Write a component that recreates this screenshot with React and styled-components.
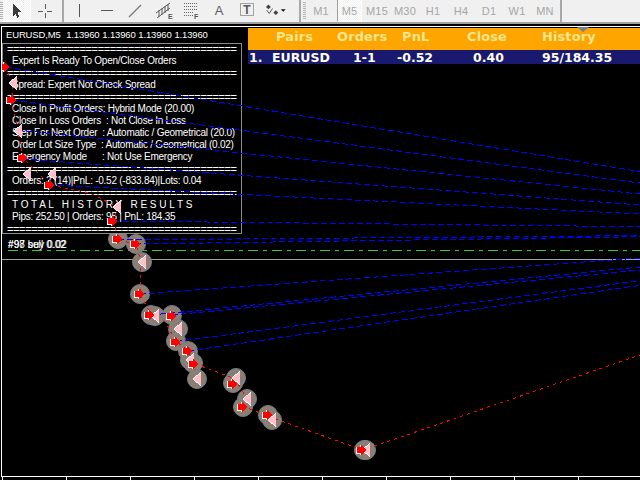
import React from "react";
import styled, { createGlobalStyle } from "styled-components";

const Global = createGlobalStyle`
  html, body { margin: 0; padding: 0; background: #000; }
  #root { width: 640px; height: 480px; overflow: hidden; }
`;

const Page = styled.div`
  width: 640px; height: 480px; background: #000; display: flex; flex-direction: column; overflow: hidden;
  font-family: "Liberation Sans", sans-serif;
`;
const Toolbar = styled.div`
  height: 22px; flex: none; display: flex; align-items: stretch; background: #f0f0f0;
  border-bottom: 2px solid #a0a0a0;
`;
const Grip = styled.div`
  width: 3px; margin: 2px ${p => p.$after || 0}px 2px ${p => p.$before || 0}px; flex: none;
  background: repeating-linear-gradient(#b4b4b4 0 1px, #f0f0f0 1px 2px);
`;
const Sep = styled.div`
  width: 2px; flex: none; background: #a8a8a8; margin: 0 ${p => p.$after || 0}px 0 ${p => p.$before || 0}px;
`;
const Tool = styled.div`
  width: 28px; flex: none; box-sizing: border-box; height: 22px; display: flex;
  ${p => p.$active && `
    background: repeating-conic-gradient(#ffffff 0 25%, #f0f0f0 0 50%) 0 0 / 2px 2px;
    border-right: 1px solid #fff; border-bottom: 1px solid #fff;
  `}
`;
const Tf = styled.div`
  width: 28px; flex: none; box-sizing: border-box; height: 22px; display: flex; align-items: center; justify-content: center;
  font-size: 11px; color: #a6a6a6; letter-spacing: .2px;
  ${p => p.$active && `
    width: 25px; margin: 0 1px 0 2px;
    background: repeating-conic-gradient(#ffffff 0 25%, #f0f0f0 0 50%) 0 0 / 2px 2px;
    border-left: 1px solid #a0a0a0; border-right: 1px solid #fff; border-bottom: 1px solid #fff;
  `}
`;
const ChartFrame = styled.div`
  position: relative; flex: none; box-sizing: border-box; height: 451px; margin: 2px 0 0 1px;
  border-left: 1px solid #fff; border-top: 1px solid #fff; border-bottom: 1px solid #fff;
`;
const TimeAxis = styled.div`
  flex: none; height: 3px; display: flex; margin-left: 2px;
`;
const Tick = styled.div`
  width: 64px; flex: none; box-sizing: border-box; border-left: 1px solid #fff;
`;
const Layer = styled.svg`
  position: absolute; left: 0; top: 0; width: 638px; height: 449px; z-index: ${p => p.$z};
`;
const Symbol = styled.div`
  position: absolute; left: 4px; top: 1px; height: 14px; line-height: 14px; z-index: 3; color: #fff;
  font-size: 9.5px; white-space: pre; letter-spacing: -.15px; word-spacing: .3px;
`;
const Panel = styled.div`
  position: absolute; left: 0; top: 16px; width: 240px; height: 191px; box-sizing: border-box; z-index: 2;
  background: #000; border: 1px solid #8c8c8c; display: flex; flex-direction: column;
  & > :first-child { margin-top: -1px; }
`;
const PanelLine = styled.div`
  height: 12px; line-height: 12px; flex: none; padding-left: 9px; color: #fff;
  font-size: 10px; white-space: pre; letter-spacing: ${p => p.$spacing ?? -0.25}px;
`;
const Rule = styled(PanelLine)`
  padding-left: 4px; font-size: 11px; letter-spacing: -.38px; overflow: hidden;
`;
const TradeLabel = styled.div`
  position: absolute; left: 6px; top: 211px; height: 14px; line-height: 14px; color: #fff; z-index: 2;
  font-size: 10px; white-space: pre; letter-spacing: .1px;
`;
const Table = styled.div`
  position: absolute; left: 246px; right: 0; top: 1px; z-index: 2; font-family: "DejaVu Sans", sans-serif;
  font-weight: 700; font-size: 12.5px; white-space: pre;
`;
const HeadRow = styled.div`
  height: 22px; box-sizing: border-box; padding-bottom: 6px; background: #ffa500; color: #f0e68c; display: grid; align-items: center;
  grid-template-columns: 28px 61px 65px 65px 75px 1fr; font-size: 13px; letter-spacing: .1px;
`;
const BodyRow = styled.div`
  height: 14px; box-sizing: border-box; padding-bottom: 1px; background: #191970; color: #fffff0; display: grid; align-items: center;
  grid-template-columns: 1px 23px 81px 44px 76px 69px 1fr;
`;
const ShiftMark = styled.div`
  position: absolute; left: 575px; top: 0; width: 0; height: 0; z-index: 4;
  border-left: 6px solid transparent; border-right: 6px solid transparent; border-top: 5px solid #708090;
`;

const Ico = ({ children }) => (
  <svg width="28" height="22" viewBox="0 0 28 22" fill="none" shapeRendering="crispEdges">{children}</svg>
);

const headers = ["", "Pairs", "Orders", "PnL", "Close", "History"];
const cells = ["", "1.", "EURUSD", "1-1", "-0.52", "0.40", "95/184.35"];
const rule = "=".repeat(38);
const ticks = Array.from({ length: 10 }, (_, i) => i);
const frames = ["M1", "M5", "M15", "M30", "H1", "H4", "D1", "W1", "MN"];

const rows = [
  ["r"],
  ["t", "Expert Is Ready To Open/Close Orders"],
  ["r"],
  ["t", "Spread: Expert Not Check Spread"],
  ["r"],
  ["t", "Close In Profit Orders: Hybrid Mode (20.00)"],
  ["t", "Close In Loss Orders  : Not Close In Loss"],
  ["t", "Step For Next Order  : Automatic / Geometrical (20.0)"],
  ["t", "Order Lot Size Type  : Automatic / Geometrical (0.02)"],
  ["t", "Emergency Mode      : Not Use Emergency"],
  ["r"],
  ["t", "Orders: 2 (14)|PnL: -0.52 (-833.84)|Lots: 0.04"],
  ["r"],
  ["t", "T O T A L   H I S T O R Y   R E S U L T S", 0],
  ["t", "Pips: 252.50 | Orders: 95 | PnL: 184.35"],
  ["r"],
];

const blue = [
  [6, 67, 640, 171.7], [12, 100, 640, 183], [17, 130, 640, 194], [23, 159, 640, 205],
  [49, 185, 640, 214], [114, 221, 640, 226.7], [118, 240, 640, 235.6], [135, 244, 640, 236.7],
  [140, 294, 640, 258], [151, 315, 640, 267], [172, 315, 640, 270], [176, 341.5, 640, 280.7], [188, 351, 640, 285.3],
];
const redPath = "5,67 13,83 12,100 18,131 23,158 50,185 90,193 117,207 114,221 118,240 136,244 141,262 140,294 151,315 165,322 176,341 188,351 193,363 235,379 243,392 245,407 270,417 363,450 640,355";

const circles = [
  [118, 239], [136, 244], [142, 262], [140, 294], [151, 315], [155, 316], [172, 315], [178, 329], [176, 341], [188, 351],
  [190, 360], [193, 363], [197, 379], [236, 378], [233, 383], [247, 399], [243, 407], [268, 415], [272, 420], [364, 450], [366, 450],
];
const buys = [
  [5, 67], [12, 100], [23, 158], [50, 185], [113, 221], [118, 239], [136, 244], [140, 294], [150, 315], [172, 316],
  [176, 342], [188, 351], [194, 364], [233, 384], [243, 407], [268, 415], [362, 450],
];
const sells = [
  [13, 83], [18, 131], [27, 174], [52, 174], [117, 207], [142, 262], [155, 316], [178, 329], [190, 360], [197, 379],
  [236, 378], [247, 399], [272, 420], [366, 450],
];

const arrowPoints = (x, y) =>
  `${x - 5},${y - 3} ${x - 1},${y - 3} ${x - 1},${y - 5} ${x + 5},${y} ${x - 1},${y + 5} ${x - 1},${y + 3} ${x - 5},${y + 3}`;

const BuyArrow = ({ x, y }) => (
  <g>
    <polygon points={arrowPoints(x - 1, y)} fill="#ffffff" stroke="#ffffff" strokeWidth="1" />
    <polygon points={arrowPoints(x, y)} fill="#ff0000" />
  </g>
);
const SellArrow = ({ x, y }) => (
  <g>
    <polygon points={`${x - 5},${y} ${x + 4},${y - 7} ${x + 4},${y + 7}`} fill="#ffffff" />
    <polygon points={`${x - 4},${y} ${x + 4},${y - 6} ${x + 4},${y + 6}`} fill="#ffc0cb" />
  </g>
);

export default function App() {
  return (
    <Page>
      <Global />
      <Toolbar>
        <Grip />
        <Tool $active>
          <Ico><polygon points="10,3 10,17 13,14 15,18 17,17 15,12 19,12" fill="#3a3a3a" /></Ico>
        </Tool>
        <Tool>
          <Ico><path d="M7 11H12M16 11H21M14 4V9M14 13V18" stroke="#5a5a5a" /></Ico>
        </Tool>
        <Sep $before={3} $after={1} />
        <Tool>
          <Ico><path d="M14.5 4V17" stroke="#555" strokeWidth="1.4" /></Ico>
        </Tool>
        <Tool>
          <Ico><path d="M8 10.5H20" stroke="#555" strokeWidth="1.4" /></Ico>
        </Tool>
        <Tool>
          <svg width="28" height="22" viewBox="0 0 28 22" fill="none">
            <path d="M8 17L20 5" stroke="#777" strokeWidth="1.3" />
          </svg>
        </Tool>
        <Tool>
          <svg width="28" height="22" viewBox="0 0 28 22" fill="none">
            <path d="M7 13L21 3M8 18L21 8M10 10L10 17M13 8L13 15M16 6L16 13M19 4L19 11" stroke="#5a5a5a" />
            <text x="19" y="19" fontSize="7" fontWeight="700" fontFamily="Liberation Sans" fill="#555">E</text>
          </svg>
        </Tool>
        <Tool>
          <svg width="28" height="22" viewBox="0 0 28 22" fill="none">
            <path d="M7 3.5H20M7 6.5H20M7 9.5H20M7 12.5H17M7 15.5H17" stroke="#666" strokeDasharray="1 1" />
            <text x="17" y="19" fontSize="7" fontWeight="700" fontFamily="Liberation Sans" fill="#555">F</text>
          </svg>
        </Tool>
        <Tool>
          <svg width="28" height="22" viewBox="0 0 28 22">
            <text x="14" y="15" textAnchor="middle" fontSize="13" fontFamily="Liberation Sans" fill="#5a5a5a">A</text>
          </svg>
        </Tool>
        <Tool>
          <svg width="28" height="22" viewBox="0 0 28 22" fill="none">
            <rect x="7.5" y="3.5" width="13" height="12" stroke="#555" strokeDasharray="1 1" />
            <text x="14" y="14" textAnchor="middle" fontSize="12" fontWeight="700" fontFamily="Liberation Sans" fill="#5a5a5a">T</text>
          </svg>
        </Tool>
        <Tool>
          <svg width="34" height="22" viewBox="0 0 34 22" fill="none">
            <polygon points="9,3 12,6 9,9 6,6" fill="#444" />
            <polygon points="18,10 21,13 18,16 15,13" fill="#444" />
            <path d="M7 10L10 14L14 8" stroke="#555" strokeWidth="1.2" />
            <polygon points="24,9 30,9 27,12" fill="#111" />
          </svg>
        </Tool>
        <Sep $before={10} $after={2} />
        <Grip $after={1} />
        {frames.map(f => <Tf key={f} $active={f === "M5"}>{f}</Tf>)}
        <Sep $before={1} />
      </Toolbar>

      <ChartFrame>
        <Layer $z={1} viewBox="2 27 638 449">
          <path d="M2 259.5H640" stroke="#a4a4a4" shapeRendering="crispEdges" />
          <path d="M8 250.5H640" stroke="#32cd32" strokeDasharray="10 5 4 5" shapeRendering="crispEdges" />
          {circles.map(([x, y], i) => (
            <circle key={i} cx={x} cy={y} r="9.5" fill="#8c7e70" stroke="#708090" strokeWidth="1" />
          ))}
        </Layer>

        <Symbol>EURUSD,M5  1.13960 1.13960 1.13960 1.13960</Symbol>

        <Panel>
          {rows.map(([kind, text, spacing], i) =>
            kind === "r" ? <Rule key={i}>{rule}</Rule> : <PanelLine key={i} $spacing={spacing}>{text}</PanelLine>
          )}
        </Panel>

        <TradeLabel>#97 sell 0.02</TradeLabel>
        <TradeLabel>#98 buy 0.02</TradeLabel>

        <Table>
          <HeadRow>{headers.map((h, i) => <span key={i}>{h}</span>)}</HeadRow>
          <BodyRow>{cells.map((c, i) => <span key={i}>{c}</span>)}</BodyRow>
        </Table>
        <ShiftMark />

        <Layer $z={3} viewBox="2 27 638 449">
          <g shapeRendering="crispEdges" fill="none">
            {blue.map(([a, b, c, d], i) => (
              <line key={i} x1={a} y1={b} x2={c} y2={d} stroke="#0000ff" strokeDasharray="6 3" />
            ))}
            <polyline points={redPath} stroke="#ff0000" strokeDasharray="3 4" />
          </g>
          <g shapeRendering="crispEdges">
            {sells.map(([x, y], i) => <SellArrow key={i} x={x} y={y} />)}
            {buys.map(([x, y], i) => <BuyArrow key={i} x={x} y={y} />)}
          </g>
        </Layer>
      </ChartFrame>

      <TimeAxis>{ticks.map(t => <Tick key={t} />)}</TimeAxis>
    </Page>
  );
}
